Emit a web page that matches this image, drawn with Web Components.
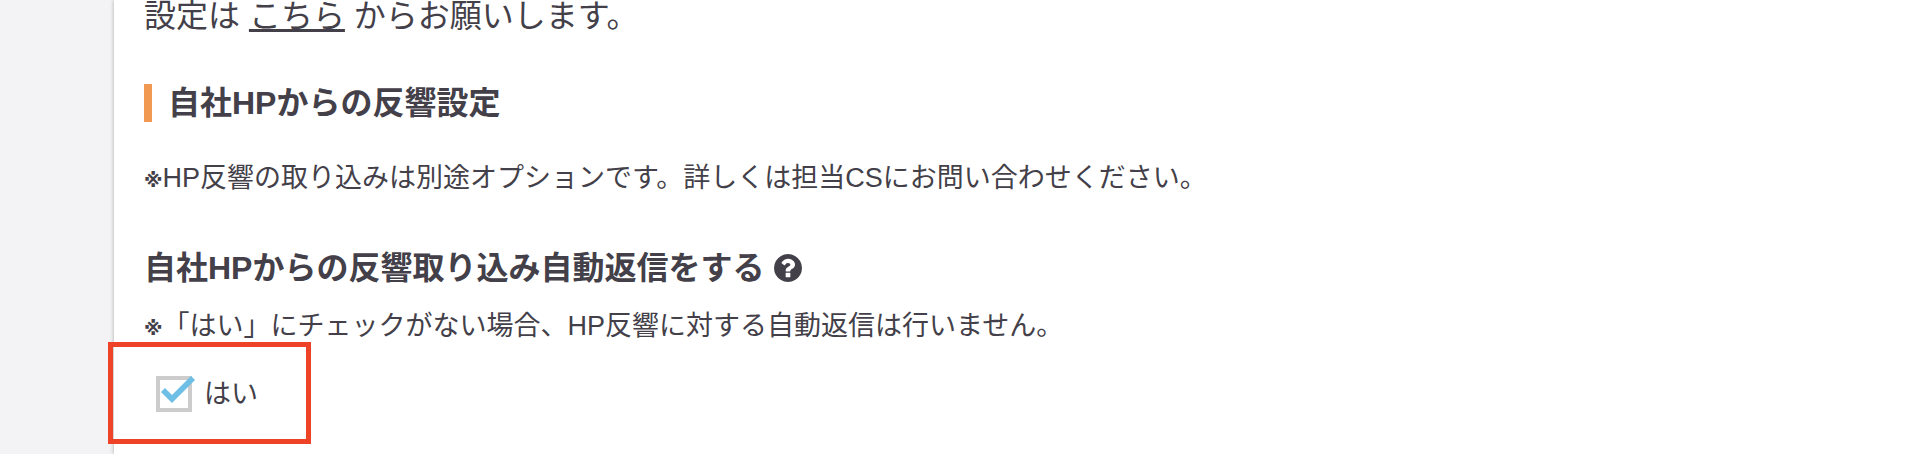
<!DOCTYPE html>
<html lang="ja">
<head>
<meta charset="utf-8">
<meta name="viewport" content="width=device-width, initial-scale=1">
<title>反響設定</title>
<style>
  body {
    margin: 0;
    background: #f3f3f6;
    color: #434049;
    font-family: "Liberation Sans", "Noto Sans CJK JP", sans-serif;
    font-size: 32px;
    line-height: 32px;
  }

  a {
    color: inherit;
    text-decoration: underline 3px;
    text-decoration-skip-ink: none;
    text-underline-offset: 2px;
  }
</style>
</head>
<body>
<settings-panel>
  <p>設定は <a href="#mail">こちら</a> からお願いします。</p>
  <section-title>自社HPからの反響設定</section-title>
  <note-text>HP反響の取り込みは別途オプションです。詳しくは担当CSにお問い合わせください。</note-text>
  <field-title>自社HPからの反響取り込み自動返信をする</field-title>
  <note-text compact>「はい」にチェックがない場合、HP反響に対する自動返信は行いません。</note-text>
  <check-field checked>はい</check-field>
</settings-panel>

<script>
function define(name, html, setup) {
  const template = document.createElement("template");
  template.innerHTML = html;

  customElements.define(name, class extends HTMLElement {
    constructor() {
      super();
      this.attachShadow({ mode: "open" });
      this.shadowRoot.appendChild(template.content.cloneNode(true));
    }

    connectedCallback() {
      if (setup) setup(this);
    }
  });
}

define("settings-panel", `
  <style>
    :host {
      display: block;
      box-sizing: border-box;
      min-height: 100vh;
      margin-left: 114px;
      padding: 0 30px 40px;
      background: #fff;
      box-shadow: 0 0 4px rgba(0, 0, 0, 0.3);
    }

    ::slotted(p) {
      margin: 0;
    }
  </style>
  <main><slot></slot></main>
`);

define("section-title", `
  <style>
    :host {
      display: block;
      margin-top: 52px;
    }

    h2 {
      margin: 0;
      padding-left: 16px;
      border-left: 8px solid #f19953;
      font-size: 32px;
      line-height: 38px;
    }
  </style>
  <h2><slot></slot></h2>
`);

define("note-text", `
  <style>
    :host {
      display: block;
      margin-top: 36px;
    }

    :host([compact]) {
      margin-top: 18px;
    }

    p {
      margin: 0;
      font-size: 27px;
      line-height: 40px;
    }

    .mark {
      font-family: "DejaVu Sans", sans-serif;
      font-size: 19px;
      font-weight: bold;
      line-height: 1;
    }
  </style>
  <p><span class="mark">※</span><slot></slot></p>
`);

define("field-title", `
  <style>
    :host {
      display: block;
      margin-top: 50px;
    }

    h3 {
      display: flex;
      align-items: center;
      gap: 10px;
      margin: 0;
      font-size: 32px;
      line-height: 40px;
    }

    svg {
      width: 28px;
      height: 28px;
      fill: currentColor;
    }
  </style>
  <h3>
    <slot></slot>
    <svg viewBox="0 0 1536 1536" aria-hidden="true">
      <path d="M896 1248v-192q0-14-9-23t-23-9H672q-14 0-23 9t-9 23v192q0 14 9 23t23 9h192q14 0 23-9t9-23zm256-672q0-88-55.500-163T958 297t-170-41q-243 0-371 213-15 24 8 42l132 100q7 6 19 6 16 0 25-12 53-68 86-92 34-24 86-24 48 0 85.500 26t37.500 59q0 38-20 61t-68 45q-63 28-115.500 86.500T640 892v36q0 14 9 23t23 9h192q14 0 23-9t9-23q0-19 21.500-49.500T972 829q32-18 49-28.500t46-35 44.500-48 28-60.500 12.500-81zm384 192q0 209-103 385.500T1153.500 1433 768 1536t-385.500-103T103 1153.500 0 768t103-385.500T382.500 103 768 0t385.500 103T1433 382.500 1536 768z"/>
    </svg>
  </h3>
`);

define("check-field", `
  <style>
    :host {
      display: block;
      margin: 30px 0 0 12px;
    }

    .field {
      display: inline-flex;
      position: relative;
      align-items: center;
      gap: 12px;
      font-size: 27px;
      line-height: 36px;
      vertical-align: top;
      cursor: pointer;
    }

    /* red call-out frame around the whole field */
    .field::after {
      content: "";
      position: absolute;
      inset: -34px -53px -32px -48px;
      border: 5px solid #ee4326;
      pointer-events: none;
    }

    input {
      position: relative;
      box-sizing: border-box;
      width: 36px;
      height: 36px;
      margin: 0;
      appearance: none;
      border: 4px solid #ccc;
      background: #fff;
    }

    /* the tick reaches over the right edge of the box */
    input:checked::before {
      content: "";
      position: absolute;
      top: -4px;
      left: -4px;
      width: 40px;
      height: 36px;
      background: #6dbfe5;
      clip-path: polygon(5px 16px, 9px 12px, 16px 19px, 35px 0, 39px 4px, 16px 27px);
    }
  </style>
  <label class="field"><input type="checkbox"><span><slot></slot></span></label>
`, (el) => {
  el.shadowRoot.querySelector("input").checked = el.hasAttribute("checked");
});
</script>
</body>
</html>
